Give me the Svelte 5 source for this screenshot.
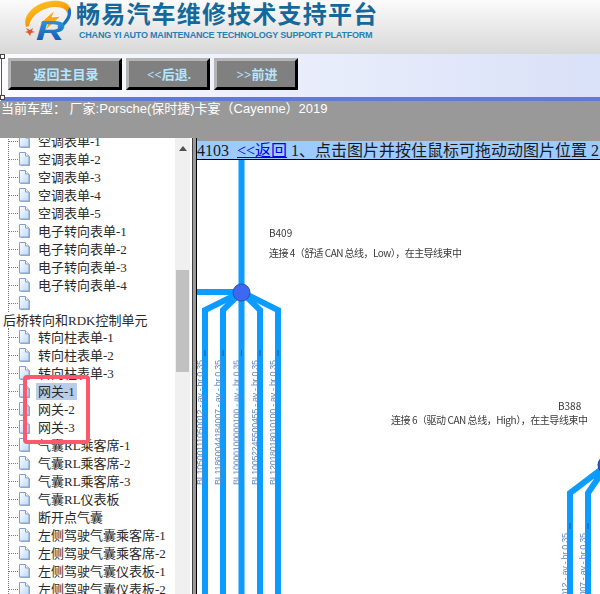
<script>
  const groupA = ['空调表单-1','空调表单-2','空调表单-3','空调表单-4','空调表单-5','电子转向表单-1','电子转向表单-2','电子转向表单-3','电子转向表单-4',''];
  const groupB = ['转向柱表单-1','转向柱表单-2','转向柱表单-3','网关-1','网关-2','网关-3','气囊RL乘客席-1','气囊RL乘客席-2','气囊RL乘客席-3','气囊RL仪表板','断开点气囊','左侧驾驶气囊乘客席-1','左侧驾驶气囊乘客席-2','左侧驾驶气囊仪表板-1','左侧驾驶气囊仪表板-2'];

  const leftWires = [205, 223, 241.5, 260, 278];
  const wireCodes = ['BL10500111050012', 'BL11860044184007', 'BL10000100000100', 'BL10052245500455', 'BL12018018010100'];
  const rightWires = [570, 588];
</script>

{#snippet row(label)}
  <li class="row">
    <span class="dots"></span>
    <svg class="doc" width="13" height="16" viewBox="0 0 13 16">
      <path d="M2.5 2.5h6l3.5 3.5v9h-9.5z" fill="#a9a9bd"/>
      <path d="M1.5 1.5h6l3.5 3.5v9h-9.5z" fill="url(#docFill)" stroke="#7f9fd6"/>
      <path d="M7.5 1.5v3.5h3.5" fill="#fff" stroke="#7f9fd6"/>
    </svg>
    {#if label}
      <span class="label" class:selected={label === '网关-1'}>{label}</span>
    {/if}
  </li>
{/snippet}

<div class="page">
  <header class="banner">
    <svg class="logo" width="50" height="48" viewBox="0 0 50 48">
      <defs>
        <linearGradient id="ring" x1="0" y1="0" x2="0.7" y2="1">
          <stop offset="0" stop-color="#ffd02a"/>
          <stop offset="0.55" stop-color="#f9a30f"/>
          <stop offset="1" stop-color="#ea6a0c"/>
        </linearGradient>
        <linearGradient id="rBlue" x1="0" y1="0" x2="0" y2="1">
          <stop offset="0" stop-color="#3aa5e6"/>
          <stop offset="1" stop-color="#0d4ea6"/>
        </linearGradient>
      </defs>
      <path d="M2 27C-2 16 10 3 27 1c9-1 17 1 19 7 1 3 0 6-2 9 0-6-4-10-12-10C19 7 7 15 5 26z" fill="url(#ring)"/>
      <path d="M46 7c3 7 0 15-9 21l-4-1c7-4 12-11 11-17z" fill="#1b6fc0"/>
      <path d="M31 10L15 24l9-1-3 8 16-15-9 1z" fill="#f9a80f" stroke="#fff" stroke-width="0.8"/>
      <path d="M2 28l4 2 3-2-1 3 3 1-4 1-1 3-2-3-3-1 3-1z" fill="#e4572a"/>
      <text class="logo-r" transform="translate(12 40) scale(1.4 1)" fill="url(#rBlue)">R</text>
    </svg>
    <div class="brand">
      <h1>畅易汽车维修技术支持平台</h1>
      <p>CHANG YI AUTO MAINTENANCE TECHNOLOGY SUPPORT PLATFORM</p>
    </div>
  </header>

  <nav class="toolbar">
    <i class="handle top"></i>
    <button class="wide">返回主目录</button>
    <button>&lt;&lt;后退.</button>
    <button>&gt;&gt;前进</button>
    <i class="handle bottom"></i>
  </nav>

  <div class="status">当前车型： 厂家:Porsche(保时捷)卡宴（Cayenne）2019</div>

  <main class="split">
    <aside class="tree-pane">
      <div class="tree">
        <svg width="0" height="0" class="defs">
          <defs>
            <linearGradient id="docFill" x1="0" y1="0" x2="1" y2="1">
              <stop offset="0" stop-color="#ffffff"/>
              <stop offset="1" stop-color="#bcd8fb"/>
            </linearGradient>
          </defs>
        </svg>
        <ul class="group first">
          {#each groupA as label}
            {@render row(label)}
          {/each}
        </ul>
        <div class="parent">后桥转向和RDK控制单元</div>
        <ul class="group">
          {#each groupB as label}
            {@render row(label)}
          {/each}
        </ul>
      </div>
      <div class="scrollbar">
        <span class="arrow"></span>
        <span class="thumb"></span>
      </div>
    </aside>

    <div class="splitter"></div>

    <section class="viewer">
      <div class="title"><span class="num">4103</span> <a href="#back">&lt;&lt;返回</a> 1、点击图片并按住鼠标可拖动动图片位置 2</div>
      <svg class="diagram" width="403" height="434" viewBox="197 160 403 434">
        <g class="wire">
          <path d="M241.5 160V292M197 292H241.5"/>
          {#each leftWires as x}
            <path d="M241.5 292L{x} 310V594"/>
          {/each}
          <path d="M607 465L570 493V594M607 465L588 493V594"/>
        </g>
        <circle cx="241.5" cy="292.5" r="8.5" fill="#3d68f2" stroke="#2c4bb0"/>
        <circle cx="607" cy="465" r="9" fill="#2b52d8" stroke="#23408f"/>
        {#each leftWires as x, i}
          <path d="M{x} 350V356" class="tick"/>
          <text class="code" transform="translate({x - 2} 485) rotate(-90)" textLength="125">{wireCodes[i]} - ay - br 0.35</text>
        {/each}
        {#each rightWires as x, i}
          <path d="M{x} 523V529" class="tick"/>
          <text class="code" transform="translate({x - 2} 658) rotate(-90)" textLength="125">{wireCodes[i]} - ay - br 0.35</text>
        {/each}
        <text class="note" x="269" y="237">B409</text>
        <text class="note" x="269" y="257" textLength="193">连接 4（舒适 CAN 总线，Low），在主导线束中</text>
        <text class="note" x="558" y="410">B388</text>
        <text class="note" x="391" y="424" textLength="197">连接 6（驱动 CAN 总线，High），在主导线束中</text>
      </svg>
    </section>
  </main>

  <div class="callout"></div>
</div>

<style>
  :global(body) {
    margin: 0;
    overflow: hidden;
  }

  .page {
    position: relative;
    display: flex;
    flex-direction: column;
    width: 600px;
    height: 594px;
    overflow: hidden;
    background: #fff;
    font-family: "Liberation Serif", "Noto Sans CJK SC", serif;
  }

  /* banner */
  .banner {
    display: flex;
    height: 54px;
    flex: none;
    padding-left: 24px;
    box-sizing: border-box;
    background: linear-gradient(to bottom, #fbfbfb, #d8d8d8);
  }

  .logo {
    flex: none;
  }

  .logo-r {
    font: italic bold 28px "Liberation Sans", sans-serif;
  }

  .brand {
    margin-left: 2px;
    color: #14699a;
  }

  .brand h1 {
    margin: 0;
    font: bold 24px/26px "Noto Sans CJK SC", sans-serif;
    letter-spacing: 1.2px;
    white-space: nowrap;
  }

  .brand p {
    margin: 4px 0 0 3px;
    font: bold 9px/11px "Liberation Sans", sans-serif;
    letter-spacing: -0.2px;
    color: #2780b5;
    white-space: nowrap;
  }

  /* toolbar */
  .toolbar {
    position: relative;
    display: flex;
    flex: none;
    gap: 4px;
    height: 47px;
    box-sizing: border-box;
    margin-left: 1px;
    padding: 4px 0 0 6px;
    border-left: 1px solid #555;
    border-bottom: 4px solid #5d7dd2;
    background: linear-gradient(to right, #fbfbff, #d9e1f8);
  }

  .toolbar button {
    width: 84px;
    height: 32px;
    padding: 0 0 2px 2px;
    border: 3px solid;
    border-color: #b4b4b4 #000 #000 #b4b4b4;
    background: #808080;
    color: #b4e6ff;
    font: bold 13px "Liberation Serif", "Noto Sans CJK SC", serif;
  }

  .toolbar .wide {
    width: 114px;
  }

  .handle {
    position: absolute;
    left: -2px;
    width: 3px;
    height: 3px;
    border: 1px solid #444;
    background: #fff;
  }

  .handle.top {
    top: 0;
  }

  .handle.bottom {
    bottom: -3px;
  }

  /* status */
  .status {
    flex: none;
    height: 37px;
    box-sizing: border-box;
    background: #999;
    color: #fff;
    font: 13px/16px "Liberation Sans", "Noto Sans CJK SC", sans-serif;
    padding-left: 1px;
    white-space: nowrap;
  }

  .split {
    display: flex;
    flex: 1;
    min-height: 0;
  }

  /* tree */
  .tree-pane {
    display: flex;
    flex: none;
    width: 192px;
    padding-right: 2px;
    box-sizing: border-box;
  }

  .tree {
    flex: 1;
    overflow: hidden;
    font-size: 13px;
    color: #2a2a2a;
  }

  .defs {
    position: absolute;
  }

  .group {
    list-style: none;
    margin: 0 0 0 8px;
    padding: 0;
    border-left: 1px dotted #777;
  }

  .group.first {
    margin-top: -6px;
  }

  .row {
    display: flex;
    align-items: center;
    height: 18px;
    white-space: nowrap;
  }

  .dots {
    width: 9px;
    border-top: 1px dotted #777;
  }

  .doc {
    flex: none;
    margin-right: 7px;
  }

  .label {
    padding: 0 2px;
    margin-left: -2px;
    line-height: 17px;
  }

  .label.selected {
    background: #b9cde9;
  }

  .parent {
    height: 16px;
    line-height: 18px;
    padding-left: 3px;
    white-space: nowrap;
  }

  .scrollbar {
    flex: none;
    width: 15px;
    padding-top: 8px;
    box-sizing: border-box;
    background: #f0f0f0;
  }

  .arrow {
    display: block;
    width: 0;
    margin: 0 auto;
    border: 4px solid transparent;
    border-top: 0;
    border-bottom: 5px solid #505050;
  }

  .thumb {
    display: block;
    width: 13px;
    height: 102px;
    margin: 119px auto 0;
    background: #c1c1c1;
  }

  .splitter {
    flex: none;
    width: 5px;
    box-sizing: border-box;
    background: #999;
    border-left: 1px solid #444;
    border-right: 1px solid #000;
  }

  /* viewer */
  .viewer {
    flex: 1;
    min-width: 0;
    overflow: hidden;
    padding-top: 3px;
    background: linear-gradient(to bottom, #999 3px, #fff 3px);
  }

  .title {
    height: 18px;
    line-height: 19px;
    font-size: 16px;
    color: #1a1a1a;
    background: #9ccbff;
    border-bottom: 1px solid #000;
    white-space: nowrap;
    overflow: hidden;
  }

  .title a {
    color: #0000ee;
    margin-left: 4px;
  }

  .diagram {
    display: block;
  }

  .wire {
    fill: none;
    stroke: #0c9bff;
    stroke-width: 6;
    stroke-linejoin: miter;
  }

  .tick {
    stroke: #235a93;
    stroke-width: 1;
  }

  .code {
    font: 9px "Liberation Sans", sans-serif;
    fill: #5f88c2;
    filter: blur(0.4px);
  }

  .note {
    font: 10px "Noto Sans CJK SC", sans-serif;
    fill: #3a3a3a;
    filter: blur(0.2px);
  }

  .callout {
    position: absolute;
    left: 23px;
    top: 375px;
    width: 67px;
    height: 69px;
    box-sizing: border-box;
    border: 4px solid #fb5a6e;
    border-radius: 4px;
    pointer-events: none;
  }
</style>
